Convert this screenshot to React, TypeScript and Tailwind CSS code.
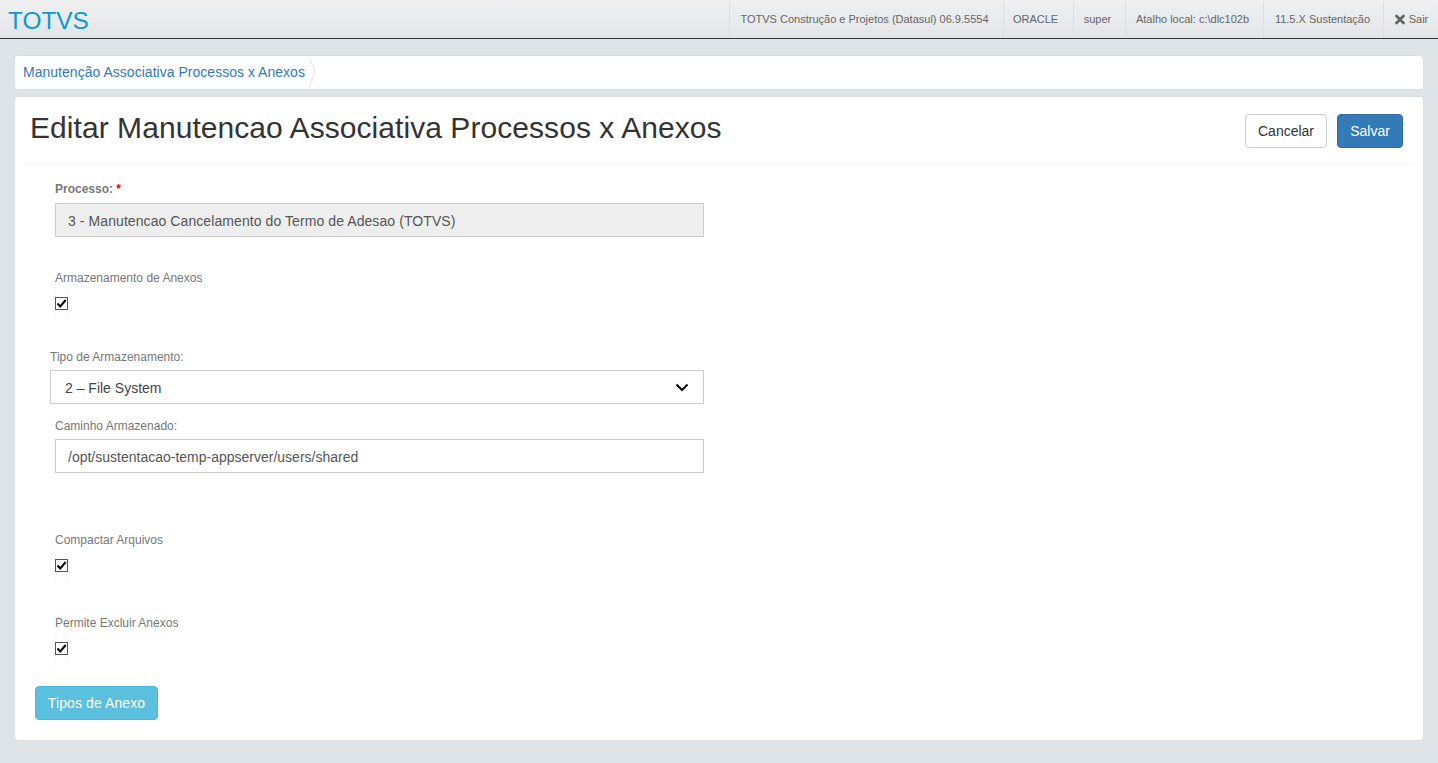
import React from "react";
import { FaTimes } from "react-icons/fa";

const Sep = ({ children, w }: { children: React.ReactNode; w: string }) => (
  <div className={`h-[34px] flex items-center justify-center border-l border-[#dcdfe2] text-[11px] text-[#666] ${w}`}>{children}</div>
);

const Check = () => (
  <div className="w-[13px] h-[34px] pt-[10px] border-x border-[#f8f8f8]">
    <span className="-mx-px w-[13px] h-[13px] border border-[#555] bg-white flex items-center justify-center">
      <svg width="11" height="11" viewBox="0 0 11 11" fill="none">
        <path d="M1.5 5.5 L4.3 8.5 L9.7 2" stroke="#000" strokeWidth="2" />
      </svg>
    </span>
  </div>
);

const Label = ({ children, className = "" }: { children: React.ReactNode; className?: string }) => (
  <div className={`text-[12px] leading-[17px] text-[#777] ${className}`}>{children}</div>
);

export default function App() {
  return (
    <div className="min-h-[763px] bg-[#dfe4e8] font-['Liberation_Sans',Arial,sans-serif] text-[#333]">
      <header className="h-[39px] border-b border-[#333] bg-gradient-to-b from-[#f0f0f1] to-[#e2e5e8] flex items-center justify-between">
        <div className="pl-[8px] pt-[3px] text-[24.4px] leading-[34px] text-[#0b9bd0]">TOTVS</div>
        <nav className="flex items-center">
          <Sep w="w-[274px] pr-[4px]">TOTVS Construção e Projetos (Datasul) 06.9.5554</Sep>
          <Sep w="w-[70px] pr-[6px]">ORACLE</Sep>
          <Sep w="w-[52px] pr-[4px]">super</Sep>
          <Sep w="w-[138px] pr-[4px]">Atalho local: c:\dlc102b</Sep>
          <Sep w="w-[120px] pr-[2px]">11.5.X Sustentação</Sep>
          <Sep w="w-[55px] pl-[1px]">
            <FaTimes className="mr-[4px] w-[10px] h-[15px] text-[#666]" />
            Sair
          </Sep>
        </nav>
      </header>

      <main className="px-[14px] pt-[16px] pb-[22px] flex flex-col gap-[6px]">
        <div className="h-[35px] rounded-[4px] bg-white border border-[#dcdfe2] flex items-center pl-[8px] text-[14px] tracking-[0.025px] text-[#337ab7]">
          <span>Manutenção Associativa Processos x Anexos</span>
          <svg width="8" height="33" viewBox="0 0 8 33" className="ml-[4px]">
            <path d="M0.5 2 L6 16.5 L0.5 31" fill="none" stroke="#e6e6e6" />
          </svg>
        </div>

        <section className="h-[645px] rounded-[4px] bg-white border border-[#dcdfe2]">
          <div className="mx-[9px] h-[67px] border-b border-[#f5f5f5] shadow-[0_2px_3px_rgba(0,0,0,0.02)] flex items-start justify-between pr-[11px] pt-[17px]">
            <h1 className="pl-[6px] -mt-[3px] text-[30px] leading-[33px] tracking-[0.06px] text-[#333]">Editar Manutencao Associativa Processos x Anexos</h1>
            <div className="flex gap-[10px]">
              <button className="w-[82px] h-[34px] rounded-[4px] border border-[#ccc] bg-white text-[14px] text-[#333]">Cancelar</button>
              <button className="w-[66px] h-[34px] rounded-[4px] border border-[#2e6da4] bg-[#337ab7] text-[14px] text-white">Salvar</button>
            </div>
          </div>

          <div className="pl-[40px] pt-[17px]">
            <Label className="font-bold">Processo: <span className="text-[#e00000]">*</span></Label>
            <div className="mt-[5px] w-[649px] h-[34px] border border-[#ccc] bg-[#eee] pl-[12px] pt-[2px] flex items-center text-[14px] tracking-[0.08px] text-[#555]">3 - Manutencao Cancelamento do Termo de Adesao (TOTVS)</div>

            <Label className="mt-[33px]">Armazenamento de Anexos</Label>
            <Check />

            <Label className="mt-[28px] -ml-[5px]">Tipo de Armazenamento:</Label>
            <div className="mt-[4px] -ml-[5px] w-[654px] h-[34px] border border-[#ccc] bg-white pl-[14px] pr-[14px] flex items-center justify-between text-[14px] text-[#444]">
              <span className="pt-[2px]">2 – File System</span>
              <svg width="14" height="9" viewBox="0 0 14 9" fill="none">
                <path d="M1.5 1.5 L7 7 L12.5 1.5" stroke="#000" strokeWidth="2" />
              </svg>
            </div>

            <Label className="mt-[14px]">Caminho Armazenado:</Label>
            <div className="mt-[4px] w-[649px] h-[34px] border border-[#ccc] bg-white pl-[12px] pt-[2px] flex items-center text-[14px] text-[#555]">/opt/sustentacao-temp-appserver/users/shared</div>

            <Label className="mt-[59px]">Compactar Arquivos</Label>
            <Check />

            <Label className="mt-[32px]">Permite Excluir Anexos</Label>
            <Check />

            <button className="mt-[20px] -ml-[20px] w-[123px] h-[34px] rounded-[4px] border border-[#46b8da] bg-[#5bc0de] text-[14px] tracking-[0.1px] text-white">Tipos de Anexo</button>
          </div>
        </section>
      </main>
    </div>
  );
}
